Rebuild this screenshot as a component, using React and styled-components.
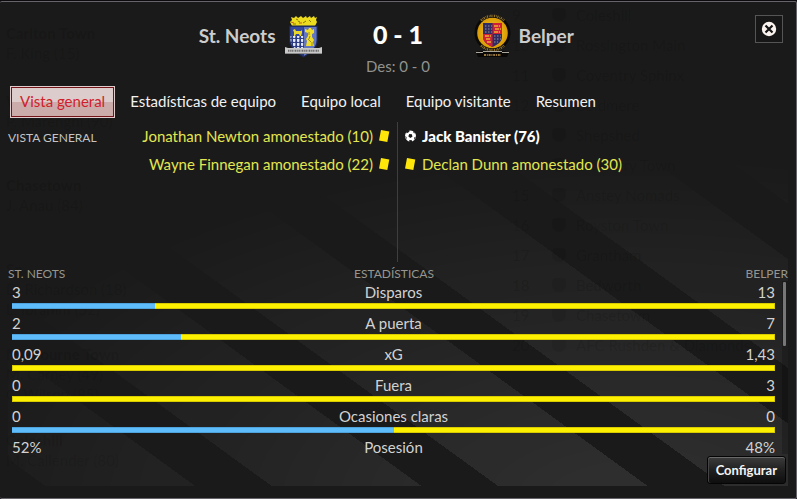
import React, { useState } from 'react';
import styled, { createGlobalStyle, css } from 'styled-components';

const TABS = [
  'Vista general',
  'Estadísticas de equipo',
  'Equipo local',
  'Equipo visitante',
  'Resumen',
];

const HOME_EVENTS = [
  { type: 'card', text: 'Jonathan Newton amonestado (10)' },
  { type: 'card', text: 'Wayne Finnegan amonestado (22)' },
];

const AWAY_EVENTS = [
  { type: 'goal', text: 'Jack Banister (76)' },
  { type: 'card', text: 'Declan Dunn amonestado (30)' },
];

const STATS = [
  { name: 'Disparos', home: '3', away: '13', share: 18.75 },
  { name: 'A puerta', home: '2', away: '7', share: 22.2 },
  { name: 'xG', home: '0,09', away: '1,43', share: 0 },
  { name: 'Fuera', home: '0', away: '3', share: 0 },
  { name: 'Ocasiones claras', home: '0', away: '0', share: 50 },
  { name: 'Posesión', home: '52%', away: '48%', share: 52 },
];

const RESULTS = [
  { team: 'Carlton Town', scorers: ['F. King (15)'], height: 68 },
  { team: 'W', scorers: ['P. Marenghi (90)'], height: 84 },
  { team: 'Chasetown', scorers: ['J. Anau (84)'], height: 84 },
  { team: 'Sp', scorers: ['D. Richardson (18)', 'L. Ibrahim (52)'], height: 85 },
  { team: 'Melbourne Town', scorers: ['M. Carney (49)', 'C. Wilson (85)'], height: 86 },
  { team: 'Coleshill', scorers: ['M. Callender (80)'], height: 50 },
];

const STANDINGS = [
  'Coleshill',
  'Rossington Main',
  'Coventry Sphinx',
  'Boldmere',
  'Shepshed',
  'Daventry Town',
  'Anstey Nomads',
  'Royston Town',
  'Grantham',
  'Bedworth',
  'Chasetown',
  'AFC Rushden & Diamonds',
];

const GlobalStyle = createGlobalStyle`
  * {
    box-sizing: border-box;
  }

  body {
    margin: 0;
    background: #0c0a0d;
    color: #d2d2d2;
    font-family: Lato, "Liberation Sans", sans-serif;
    font-size: 15px;
    line-height: 20px;
  }
`;

const Panel = styled.main`
  position: relative;
  isolation: isolate;
  display: flex;
  flex-direction: column;
  min-height: calc(100vh - 1px);
  margin-top: 1px;
  padding-bottom: 12px;
  background: #1a1a1a;
  border: 1px solid #66646a;
  border-left: 0;
  border-radius: 2px;
`;

const Backdrop = styled.div`
  position: absolute;
  inset: 0;
  z-index: -1;
  display: flex;
  justify-content: space-between;
  overflow: hidden;
  color: rgba(0, 0, 0, 0.1);
  user-select: none;
`;

const Results = styled.div`
  padding: 21px 0 0 6px;
`;

const Result = styled.div`
  height: ${({ $height }) => $height}px;
`;

const ResultTeam = styled.div`
  font-weight: 900;
`;

const Standings = styled.ol`
  width: 284px;
  margin: 0;
  padding: 0;
  list-style: none;
`;

const Standing = styled.li`
  display: grid;
  grid-template-columns: 40px 24px 1fr;
  align-items: center;
  height: 30px;
  padding-bottom: 4px;
  white-space: nowrap;
`;

const Badge = styled.span`
  width: 14px;
  height: 14px;
  border-radius: 4px 4px 7px 7px;
  background: rgba(0, 0, 0, 0.08);
`;

const Header = styled.header`
  position: relative;
  display: grid;
  grid-template-columns: 1fr 151px 1fr;
  height: 84px;
  padding-top: 12px;
`;

const Team = styled.h2`
  display: flex;
  align-items: center;
  justify-content: ${({ $away }) => ($away ? 'flex-start' : 'flex-end')};
  gap: ${({ $away }) => ($away ? 7 : 9)}px;
  height: 44px;
  margin: 0;
  font-size: 19px;
  font-weight: 700;
  color: #cccccc;
`;

const Score = styled.div`
  text-align: center;
`;

const FullTime = styled.h1`
  margin: 0;
  font-size: 25px;
  line-height: 40px;
  font-weight: 900;
  color: #ffffff;
`;

const HalfTime = styled.p`
  margin: 2px 0 0;
  color: #92928e;
`;

const CloseButton = styled.button`
  position: absolute;
  top: 13px;
  right: 13px;
  display: grid;
  place-items: center;
  width: 28px;
  height: 28px;
  padding: 0;
  background: #171717;
  border: 1px solid #555555;
`;

const Tabs = styled.nav`
  display: flex;
  gap: 5px;
  padding-left: 10px;
`;

const Tab = styled.button`
  height: 32px;
  padding: 0 8px 2px;
  border: 2px solid transparent;
  background: none;
  color: #f2f2f2;
  font: inherit;
  white-space: nowrap;

  ${({ $active }) => $active && css`
    background: linear-gradient(#dccccc 50%, #ccabab 50%);
    border: 1px solid #e0cccc;
    padding: 0 9px 2px;
    box-shadow: inset 0 0 0 1px #74121a;
    color: #d01f2b;
  `}
`;

const Content = styled.div`
  position: relative;
  flex: 1;
  display: flex;
  flex-direction: column;
  margin: 4px 8px 0;

  &::before {
    content: "";
    position: absolute;
    inset: 0;
    z-index: -2;
    background: repeating-linear-gradient(
      36deg,
      transparent 0 22px,
      rgba(255, 255, 255, 0.09) 22px 110px,
      transparent 110px 133px
    );
    mask-image: radial-gradient(ellipse 95% 100% at 80% 105%, #000 10%, transparent 100%);
  }
`;

const Overview = styled.section`
  display: grid;
  grid-template-columns: 1fr 1fr;
  height: 140px;
`;

const Side = styled.div`
  display: flex;
  justify-content: space-between;
  padding: ${({ $away }) => ($away ? '0 0 0 7px' : '0 7px 0 0')};
  border-right: ${({ $away }) => ($away ? '0' : '1px solid #3e3e3e')};
`;

const Label = styled.h3`
  margin: 0;
  padding-top: 6px;
  font-size: 12px;
  font-weight: 400;
  color: #c4c4c4;
`;

const Events = styled.ul`
  margin: 0;
  padding: 0;
  list-style: none;
`;

const Event = styled.li`
  display: flex;
  flex-direction: ${({ $away }) => ($away ? 'row' : 'row-reverse')};
  align-items: center;
  gap: 6px;
  height: 28px;
  color: ${({ $goal }) => ($goal ? '#ffffff' : '#e2e650')};
  font-weight: ${({ $goal }) => ($goal ? 900 : 400)};
`;

const Stats = styled.section`
  position: relative;
`;

const Table = styled.table`
  display: block;
`;

const Head = styled.thead`
  display: block;
`;

const Body = styled.tbody`
  display: block;
  max-height: 175px;
  padding: 0 13px 0 4px;
  overflow-y: auto;
  scrollbar-width: none;
`;

const Row = styled.tr`
  display: grid;
  grid-template-columns: 1fr auto 1fr;
`;

const Cell = styled.td`
  height: 22px;
  padding: 0;
  line-height: 22px;
  text-align: ${({ $align }) => $align || 'left'};
`;

const HeadCell = styled(Cell)`
  height: 19px;
  line-height: 23px;
  font-size: 12px;
  font-weight: 400;
  color: #96968f;

  &:nth-child(2) {
    padding-right: 8px;
  }
`;

const BarCell = styled.td`
  grid-column: 1 / -1;
  padding: 0 0 3px;
`;

const Bar = styled.div`
  display: flex;
  height: 6px;
  background: #fdf000;
  box-shadow: inset 0 0 0 1px #d8cc00;
`;

const HomeShare = styled.div`
  background: #5fbcfa;
  box-shadow: inset 0 1px #4fa3dc, inset 0 -1px #4fa3dc;
`;

const ScrollRail = styled.div`
  position: absolute;
  top: 19px;
  right: 0;
  bottom: 2px;
  width: 6px;
  background: rgba(0, 0, 0, 0.2);
`;

const ScrollThumb = styled.div`
  width: 3px;
  height: 64px;
  margin: 1px;
  border-radius: 1px;
  background: #777777;
`;

const Footer = styled.footer`
  display: flex;
  justify-content: flex-end;
  margin-top: auto;
  padding: 0 2px 2px;
`;

const ConfigButton = styled.button`
  height: 28px;
  padding: 0 8px;
  border: 1px solid #050505;
  border-radius: 3px;
  background: linear-gradient(#3c3c3c, #202020 50%, #0e0e0e);
  box-shadow: inset 0 1px #686868, inset 1px 0 #444444;
  color: #f4f4f4;
  font: inherit;
  font-size: 13px;
  font-weight: 700;
`;

const HomeCrest = () => (
  <svg width="38" height="43" viewBox="0 0 38 43" aria-hidden="true">
    <defs>
      <pattern id="scales" width="4" height="4" patternUnits="userSpaceOnUse">
        <rect width="4" height="4" fill="#2b3b84" />
        <path d="M0 0h2.400v2.400l-1.200.9-1.200-.9z" fill="#e4e8fa" />
      </pattern>
    </defs>
    <path
      d="M6 2l3 1 2-2 2 2 3-2 2 2 3-2 1 2 3-2 1 2 3-2 1 2 2-1-1 3 1 2-2 4H7L5 7l2-2z"
      fill="#eddc1d"
    />
    <path d="M8 9h3M13 6l2 1M18 8l3-2M24 5l2 2M11 4l2 1" stroke="#8a780c" />
    <path d="M6 7l3 1M14 8h3" stroke="#c65a28" />
    <path d="M4.500 11h28v14c0 8-7 13-14 17C12 38 4.500 33 4.500 25z" fill="#27366f" />
    <path d="M19 12h12.500v13c0 7-6 12-12.500 16z" fill="#6376be" />
    <path d="M5.500 12h13v9h-13z" fill="#3448a0" />
    <path d="M5.500 21h13v18.500C12 36 5.500 31 5.500 25z" fill="url(#scales)" />
    <path d="M8 15l2-1 1 2h5l1-1v3l-1 3h-1l-1-2h-3l-1 2H9v-4z" fill="#e9d62c" />
    <path
      d="M24 13h2l1 2 2-1v4l-2 1v3l2 3-1 2 1 4h-8l1-5-1-2 2-3v-3l-3-1v-3l3 1z"
      fill="#f0dc2a"
    />
    <path d="M24 17v3M23 24l3 3M25 21l-1 3M27 27v4" stroke="#9c8b25" />
    <path d="M4.500 11h28v14c0 8-7 13-14 17C12 38 4.500 33 4.500 25z" fill="none" stroke="#1b2552" />
    <path d="M0 32l3 1h31l3-1v7H0z" fill="#c9c9c9" />
    <path d="M0 38.500h37" stroke="#8b8b8b" />
    <path d="M3 35.700h31" stroke="#6a6a6a" strokeWidth="2" strokeDasharray="1.400 .7 .8 .6" />
  </svg>
);

const AwayCrest = () => (
  <svg width="38" height="44" viewBox="0 0 38 44" aria-hidden="true">
    <defs>
      <radialGradient id="gold">
        <stop offset="0" stopColor="#ffd22e" />
        <stop offset="1" stopColor="#d99a06" />
      </radialGradient>
    </defs>
    <circle cx="18.500" cy="19" r="18" fill="#0c0a08" />
    <path
      d="M7 6.500a16.500 16.500 0 0 1 23 0M7 31.500a16.500 16.500 0 0 0 23 0"
      fill="none"
      stroke="#8f7430"
      strokeWidth="2.400"
      strokeDasharray="1.300 .8 .7 .7"
    />
    <circle cx="18.500" cy="19" r="15.300" fill="url(#gold)" />
    <path d="M9 9h19v14c0 5-5 8-9.500 10C14 31 9 28 9 23z" fill="#2f2c62" />
    <path d="M18.500 9H28v11h-9.500zM9 20h9.500v13C14 31 9 28 9 23z" fill="#cf1f36" />
    <path d="M11 12h7M11 15h7M11 18h7M20 22h7M20 25h7M20 28h4" stroke="#9a91a0" strokeDasharray="1.500 1.500" />
    <path d="M20 12h6M21 15h6M20 18h6M11 22h6M12 25h5M13 28h4" stroke="#ecae32" strokeWidth="1.400" strokeDasharray="4 .8" />
    <path d="M2 38l4-1h25l4 1-2 5H4z" fill="#090807" />
    <path d="M2 38.500h7M28 38.500h7M9 37.500h19" stroke="#aaa59b" />
    <path d="M10 41h17" stroke="#97783a" strokeWidth="2" strokeDasharray="2 .8 1 .8" />
  </svg>
);

const CloseIcon = () => (
  <svg width="16" height="16" viewBox="0 0 16 16" aria-hidden="true">
    <circle cx="8" cy="8" r="7.200" fill="#fbf3ee" />
    <path d="M4.500 4.500l7 7M11.500 4.500l-7 7" stroke="#151515" strokeWidth="2.200" />
  </svg>
);

const CardIcon = () => (
  <svg width="11" height="12" viewBox="0 0 11 12" role="img" aria-label="Tarjeta amarilla">
    <path d="M2 0l8.300 1.500-2 10.500L0 10.500z" fill="#ffe60a" />
  </svg>
);

const BallIcon = () => (
  <svg width="11" height="12" viewBox="0 0 11 12" role="img" aria-label="Gol">
    <circle cx="5.500" cy="6" r="5.500" fill="#ffffff" />
    <path d="M4.300 4l2.600.3.500 2.400-2.200 1.300-1.900-1.700z" fill="#1a1a1a" />
    <path
      d="M2.200.8l2.600.4L3 2.800 1 3.200zM8 .8l2.600 2.800-2-.6zM0 6l1.500 1 .2 2.600zM11 6.500L9.200 7.600 9 10zM4 10.200l2.600-.2.600 2H4.600z"
      fill="#1a1a1a"
    />
  </svg>
);

const EventList = ({ events, away }) => (
  <Events>
    {events.map(({ type, text }) => (
      <Event key={text} $away={away} $goal={type === 'goal'}>
        {type === 'goal' ? <BallIcon /> : <CardIcon />}
        <span>{text}</span>
      </Event>
    ))}
  </Events>
);

const LeagueBackdrop = () => (
  <Backdrop aria-hidden="true">
    <Results>
      {RESULTS.map(({ team, scorers, height }) => (
        <Result key={team} $height={height}>
          <ResultTeam>{team}</ResultTeam>
          {scorers.map((scorer) => <div key={scorer}>{scorer}</div>)}
        </Result>
      ))}
    </Results>
    <Standings>
      {STANDINGS.map((team, i) => (
        <Standing key={team}>
          <span>{i + 9}</span>
          <Badge />
          <span>{team}</span>
        </Standing>
      ))}
    </Standings>
  </Backdrop>
);

const StatsTable = () => (
  <Stats>
    <Table>
      <Head>
        <Row>
          <HeadCell as="th">ST. NEOTS</HeadCell>
          <HeadCell as="th" $align="center">ESTADÍSTICAS</HeadCell>
          <HeadCell as="th" $align="right">BELPER</HeadCell>
        </Row>
      </Head>
      <Body>
        {STATS.map(({ name, home, away, share }) => (
          <React.Fragment key={name}>
            <Row>
              <Cell>{home}</Cell>
              <Cell $align="center">{name}</Cell>
              <Cell $align="right">{away}</Cell>
            </Row>
            <Row>
              <BarCell colSpan={3}>
                <Bar>
                  <HomeShare style={{ width: `${share}%` }} />
                </Bar>
              </BarCell>
            </Row>
          </React.Fragment>
        ))}
      </Body>
    </Table>
    <ScrollRail>
      <ScrollThumb />
    </ScrollRail>
  </Stats>
);

const App = () => {
  const [active, setActive] = useState(TABS[0]);

  return (
    <>
      <GlobalStyle />
      <Panel>
        <LeagueBackdrop />
        <Header>
          <Team>
            St. Neots
            <HomeCrest />
          </Team>
          <Score>
            <FullTime>0 - 1</FullTime>
            <HalfTime>Des: 0 - 0</HalfTime>
          </Score>
          <Team $away>
            <AwayCrest />
            Belper
          </Team>
          <CloseButton aria-label="Cerrar">
            <CloseIcon />
          </CloseButton>
        </Header>

        <Tabs>
          {TABS.map((tab) => (
            <Tab key={tab} $active={tab === active} onClick={() => setActive(tab)}>
              {tab}
            </Tab>
          ))}
        </Tabs>

        <Content>
          <Overview>
            <Side>
              <Label>VISTA GENERAL</Label>
              <EventList events={HOME_EVENTS} />
            </Side>
            <Side $away>
              <EventList events={AWAY_EVENTS} away />
            </Side>
          </Overview>
          <StatsTable />
          <Footer>
            <ConfigButton>Configurar</ConfigButton>
          </Footer>
        </Content>
      </Panel>
    </>
  );
};

export default App;
